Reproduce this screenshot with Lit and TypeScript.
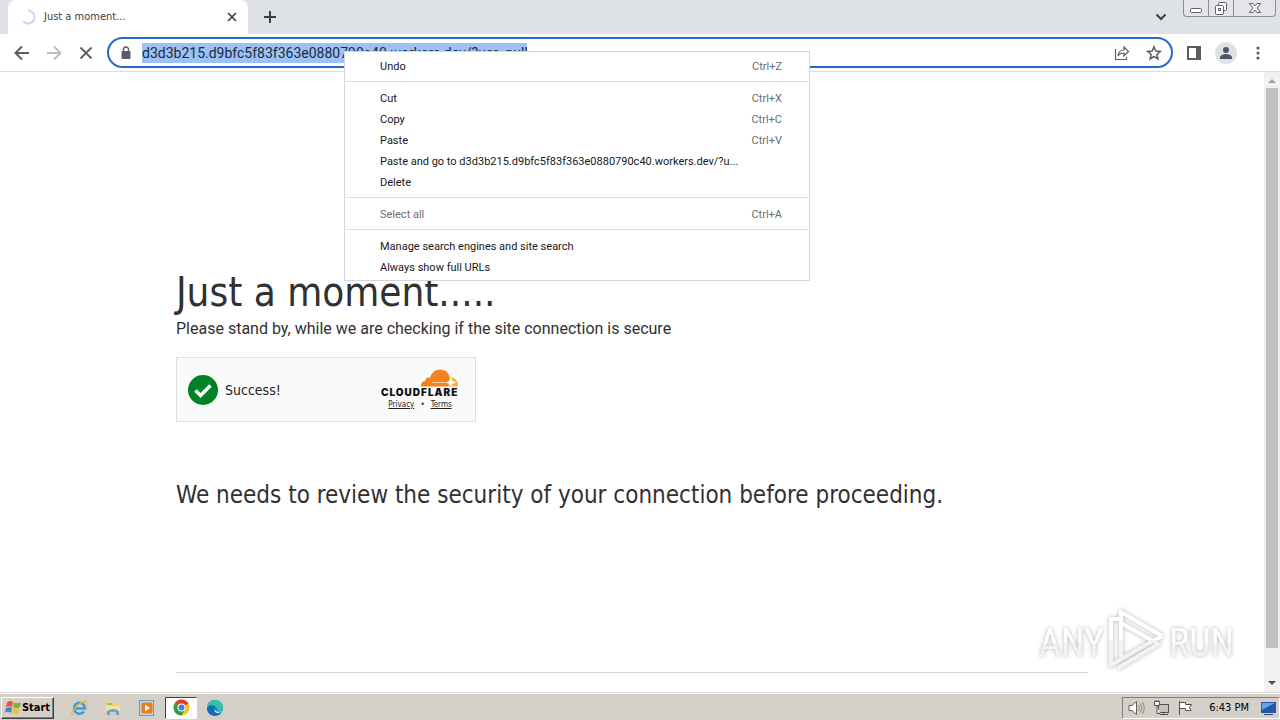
import { LitElement, html, css } from "lit";
import { customElement } from "lit/decorators.js";

const FONT = css`"DejaVu Sans Condensed", "Noto Sans", "Open Sans", sans-serif`;
const TEXT = css`Roboto, "Noto Sans", sans-serif`;

@customElement("browser-tabs")
class BrowserTabs extends LitElement {
  static styles = css`
    :host { display: flex; height: 34px; background: #dee1e6; font: 11px/16px ${FONT}; color: #3c4043; }
    button { border: 0; background: none; padding: 0; display: grid; place-items: center; }
    .tab { display: flex; align-items: center; gap: 8px; width: 220px; margin-left: 8px; padding: 0 8px 0 12px;
      background: #fff; border-radius: 8px 8px 0 0; box-sizing: content-box; }
    .title { flex: 1; }
    .new { width: 44px; }
    .spacer { flex: 1; }
    .list { width: 44px; }
    .window { display: flex; height: 17px; border: 1px solid #8a8e95; border-top: 0; border-radius: 0 0 4px 4px;
      box-sizing: border-box; margin-right: 4px; background: #e3e5e9; }
    .window button { width: 25px; border-right: 1px solid #8a8e95; }
    .window button:last-child { width: 41px; border-right: 0; }
  `;
  render() {
    return html`
      <div class="tab">
        <svg width="16" height="16" viewBox="0 0 16 16"><path d="M8 1.500a6.500 6.500 0 1 1-5 10.700" fill="none" stroke="#c9d7fb" stroke-width="2"/></svg>
        <span class="title">Just a moment...</span>
        <button aria-label="Close tab"><svg width="16" height="16"><path d="M4 4l8 8M12 4l-8 8" stroke="#3c4043" stroke-width="1.700"/></svg></button>
      </div>
      <button class="new" aria-label="New tab"><svg width="14" height="14"><path d="M7 1v12M1 7h12" stroke="#3c4043" stroke-width="2"/></svg></button>
      <span class="spacer"></span>
      <button class="list" aria-label="Search tabs"><svg width="12" height="8"><path d="M1.500 1.500l4.500 4.500 4.500-4.500" fill="none" stroke="#3c4043" stroke-width="2"/></svg></button>
      <div class="window">
        <button aria-label="Minimize"><svg width="14" height="16"><rect x="1.500" y="8.500" width="11" height="4" rx="1" fill="#fff" stroke="#5d6168"/></svg></button>
        <button aria-label="Restore"><svg width="14" height="16" fill="#fff" stroke="#5d6168"><rect x="4.500" y="2.500" width="8" height="8" rx="1"/><rect x="1.500" y="5.500" width="8" height="9" rx="1"/><rect x="4.500" y="8.500" width="2" height="2"/></svg></button>
        <button aria-label="Close"><svg width="14" height="16" fill="#fff" stroke="#5d6168"><path d="M1.500 3.500h3.500l2 2.500 2-2.500h3.500l-3.500 4.500 3.500 4.500h-3.500l-2-2.500-2 2.500h-3.500l3.500-4.500z"/></svg></button>
      </div>`;
  }
}

@customElement("browser-toolbar")
class BrowserToolbar extends LitElement {
  static styles = css`
    :host { display: flex; align-items: center; height: 37px; padding: 0 6px; background: #fff; border-bottom: 1px solid #dcdde0; }
    button { border: 0; background: none; padding: 0; width: 32px; height: 32px; display: grid; place-items: center; flex: none; }
    .box { flex: 1; display: flex; align-items: center; height: 31px; box-sizing: border-box; min-width: 0;
      border: 2px solid #1f6bd0; border-radius: 16px; margin: 0 5px; padding: 0 1px 0 9px; }
    input { border: 0; padding: 0; margin: 0 0 0 8px; outline: 0; width: 385px; height: 20px; background: #9cc1f5; color: #202a3c;
      font: 14px/20px ${TEXT}; }
    .gap { flex: 1; }
  `;
  render() {
    return html`
      <button aria-label="Back"><svg width="16" height="16" fill="none" stroke="#5a5d61" stroke-width="2"><path d="M15 8H2M8 1.500L1.500 8 8 14.500"/></svg></button>
      <button aria-label="Forward"><svg width="16" height="16" fill="none" stroke="#babcbe" stroke-width="2"><path d="M1 8h13M8 1.500L14.500 8 8 14.500"/></svg></button>
      <button aria-label="Stop"><svg width="14" height="14"><path d="M1.500 1.500l11 11M12.500 1.500l-11 11" stroke="#5a5d61" stroke-width="1.800"/></svg></button>
      <div class="box">
        <svg width="16" height="16" viewBox="0 0 16 16"><rect x="3.500" y="6" width="9" height="8" rx="1" fill="#5a5d61"/><path d="M5.500 6V4.500a2.500 2.500 0 0 1 5 0V6" fill="none" stroke="#5a5d61" stroke-width="1.400"/></svg>
        <input aria-label="Address" value="d3d3b215.d9bfc5f83f363e0880790c40.workers.dev/?usr=null">
        <span class="gap"></span>
        <button aria-label="Share"><svg width="16" height="16" fill="none" stroke="#5a5d61" stroke-width="1.200"><path d="M1.500 4v10.500h11v-2.500M4 11c.5-4 2.500-6 6-6V2l4.500 4.500-4.500 4.300V8c-3 0-4.600.8-6 3z"/></svg></button>
        <button aria-label="Bookmark"><svg width="16" height="16" fill="none" stroke="#5a5d61" stroke-width="1.500"><path d="M8 1.800l1.800 4.200 4.500.4-3.400 3 1 4.500L8 11.500l-3.900 2.400 1-4.500-3.400-3 4.500-.4z"/></svg></button>
      </div>
      <button aria-label="Side panel"><svg width="14" height="14"><path d="M1 1h12v12H1z" fill="none" stroke="#5a5d61" stroke-width="2"/><path d="M9 1h5v12H9z" fill="#5a5d61"/></svg></button>
      <button aria-label="Profile"><svg width="22" height="22"><circle cx="11" cy="11" r="11" fill="#dee1e6"/><circle cx="11" cy="8" r="3" fill="#4d566b"/><path d="M5 17v-1.500c0-2.500 4-3.500 6-3.500s6 1 6 3.500V17z" fill="#4d566b"/></svg></button>
      <button aria-label="Menu"><svg width="4" height="16" fill="#5a5d61"><circle cx="2" cy="3" r="1.600"/><circle cx="2" cy="8" r="1.600"/><circle cx="2" cy="13" r="1.600"/></svg></button>`;
  }
}

@customElement("edit-menu")
class EditMenu extends LitElement {
  static styles = css`
    :host { position: absolute; left: 344px; top: 51px; width: 466px; box-sizing: border-box; background: #fff;
      border: 1px solid #d4d5d7; padding: 4px 0 2px; font: 11px/21px ${TEXT}; z-index: 2; }
    button { display: flex; justify-content: space-between; width: 100%; height: 21px; border: 0; background: none;
      padding: 0 27px 0 35px; font: inherit; color: #16171a; text-align: left; white-space: nowrap; }
    button:disabled, .key { color: #6b6d70; }
    hr { border: 0; border-top: 1px solid #d9dadc; margin: 4px 1px 6px; }
  `;
  render() {
    const item = (label: string, key = "", off = false) =>
      html`<button ?disabled=${off}><span>${label}</span><span class="key">${key}</span></button>`;
    return html`
      ${item("Undo", "Ctrl+Z")}<hr>
      ${item("Cut", "Ctrl+X")}${item("Copy", "Ctrl+C")}${item("Paste", "Ctrl+V")}
      ${item("Paste and go to d3d3b215.d9bfc5f83f363e0880790c40.workers.dev/?u...")}${item("Delete")}<hr>
      ${item("Select all", "Ctrl+A", true)}<hr>
      ${item("Manage search engines and site search")}${item("Always show full URLs")}`;
  }
}

@customElement("check-page")
class CheckPage extends LitElement {
  static styles = css`
    :host { display: flex; flex: 1; min-height: 0; background: #fff; color: #313131; font-family: ${FONT}; }
    main { flex: 1; }
    .content { max-width: 912px; margin: 0 auto; padding: 195px 24px 0; }
    h1 { font-size: 40px; line-height: 50px; font-weight: 400; margin: 0; }
    p { font-family: ${TEXT}; font-size: 16px; line-height: 24px; margin: 0 0 16px; }
    h2 { font-size: 24px; line-height: 36px; font-weight: 400; margin: 55px 0 159px; }
    hr { border: 0; border-top: 1px solid #d5d5d5; margin: 0; }
    .widget { display: flex; align-items: center; width: 300px; height: 65px; box-sizing: border-box; background: #fafafa;
      border: 1px solid #e0e0e0; padding: 0 16px 0 11px; }
    .ok { flex: 1; margin-left: 7px; font-size: 14px; color: #232323; }
    .brand { display: flex; flex-direction: column; align-items: center; width: 78px; }
    .links { display: flex; gap: 6px; font-size: 8px; line-height: 14px; }
    a { color: #232323; }
    .name { font: 900 10px "Inter", sans-serif; letter-spacing: 1px; }
    .scroll { width: 16px; display: flex; flex-direction: column; align-items: center; background: #f1f1f1; padding: 6px 0; box-sizing: border-box; gap: 4px; }
    .thumb { width: 12px; flex: 1; background: #c1c1c1; margin-bottom: 28px; }
  `;
  render() {
    return html`
      <main><div class="content">
        <h1>Just a moment.....</h1>
        <p>Please stand by, while we are checking if the site connection is secure</p>
        <div class="widget">
          <svg width="30" height="30"><circle cx="15" cy="15" r="15" fill="#038127"/><path d="M7.500 15.500l5 5 10-10" fill="none" stroke="#fff" stroke-width="3.500"/></svg>
          <span class="ok">Success!</span>
          <div class="brand">
            <svg width="80" height="30" viewBox="0 -1 80 30">
              <path d="M41 17.500c-.3-3.500 1.500-5.500 4.500-5.800C45.500 9 48 7.800 50 9 51.500 3.500 55.500.5 60 .5c5 0 8.700 3 9.700 7.500L68.500 17.500z" fill="#f6821f"/>
              <path d="M69 17.500l1-9c4.500-.5 8.300 3 8 9z" fill="#fbad41"/>
              <path d="M52 13.500h16M71 9l1.200 3.300 3.300 1.200-3.300 1.200-1.200 3-1.200-3-3.300-1.200 3.300-1.200z" fill="#fff" stroke="#fff" stroke-width=".6"/>
              <text class="name" x="1" y="27" fill="#111">CLOUDFLARE</text>
            </svg>
            <div class="links"><a href="#">Privacy</a><span>•</span><a href="#">Terms</a></div>
          </div>
        </div>
        <h2>We needs to review the security of your connection before proceeding.</h2>
        <hr>
      </div></main>
      <div class="scroll">
        <svg width="8" height="6"><path d="M0 5l4-4 4 4z" fill="#a0a0a0"/></svg>
        <div class="thumb"></div>
        <svg width="8" height="6"><path d="M0 1l4 4 4-4z" fill="#505050"/></svg>
      </div>`;
  }
}

@customElement("task-bar")
class TaskBar extends LitElement {
  static styles = css`
    :host { display: flex; align-items: center; height: 28px; box-sizing: border-box; padding: 2px 0 0 1px; background: #d4d0c8;
      border-top: 1px solid #dedbd5; box-shadow: inset 0 1px #fff; font: 11px/20px ${FONT}; color: #000; }
    button { border: 0; background: none; padding: 0; display: flex; align-items: center; justify-content: center; }
    .start { height: 22px; width: 53px; box-sizing: border-box; font: bold 11px/20px ${FONT}; border: 1px solid;
      border-color: #fff #404040 #404040 #fff; box-shadow: inset -1px -1px #808080; }
    .apps { display: flex; flex: 1; margin-left: 9px; gap: 2px; }
    .apps button { width: 32px; height: 22px; box-sizing: border-box; }
    .apps .on { background: #fff; border: 1px solid; border-color: #404040 #fff #fff #404040; }
    .tray { display: flex; align-items: center; gap: 8px; height: 22px; box-sizing: border-box; padding: 0 2px 0 5px;
      border: 1px solid; border-color: #808080 #fff #fff #808080; }
    .clock { margin: 0 3px 0 8px; }
  `;
  render() {
    return html`
      <button class="start">
        <svg width="17" height="17"><path d="M2 3.500Q5 1 8 3L7 8Q4 6.500 1 8z" fill="#e8562a"/><path d="M9 3.500q3 1.500 7 0l-1.300 5Q11 10 8 8.300z" fill="#79b435"/><path d="M1 9q3-1.500 6 0l-1 5q-3-2-6-.5z" fill="#3a86d4"/><path d="M8 9.500q3 1.500 6.500 0l-1.200 5q-3.500 1.300-6.500-.5z" fill="#f7bf27"/></svg>Start</button>
      <div class="apps">
        <button aria-label="Internet Explorer"><svg width="18" height="18" fill="none"><path d="M14 12.500A5.500 5.500 0 1 1 15 9.500H5" stroke="#3a9de0" stroke-width="2.600"/><path d="M2.500 16C-1 14 10 2 15.500 2.500c1.500.3.800 2.500.3 3.500" stroke="#e8b93c" stroke-width="1.300"/></svg></button>
        <button aria-label="Explorer"><svg width="18" height="18"><path d="M2 3h5l1 2h8v7H2z" fill="#f1d477"/><path d="M3 4h5v2H3z" fill="#8fca66"/><path d="M2 7h14v5H2z" fill="#f7e39d"/><path d="M3 16v-4q6-4 12 0v4h-3v-3H6v3z" fill="#63a7d8"/></svg></button>
        <button aria-label="Media Player"><svg width="18" height="18"><rect x="1.500" y="1.500" width="14" height="15" fill="#b7d6ee" stroke="#6b99c4"/><rect x="3.500" y="3.500" width="11" height="11" rx="2" fill="#f07c12"/><path d="M7 5.500l5 3.500-5 3.500z" fill="#fff"/></svg></button>
        <button class="on" aria-label="Chrome"><svg width="17" height="17" viewBox="0 0 17 17"><circle cx="8.500" cy="8.500" r="8" fill="#f9c518"/><path d="M8.500 8.500L1.600 4.500A8 8 0 0 1 15.400 4.500z" fill="#e33b2e"/><path d="M8.500 8.500L1.600 4.500a8 8 0 0 0 6.900 12l3.500-6z" fill="#2c9f4b"/><circle cx="8.500" cy="8.500" r="4" fill="#fff"/><circle cx="8.500" cy="8.500" r="3" fill="#3f7fe8"/></svg></button>
        <button aria-label="Edge"><svg width="18" height="18"><circle cx="9" cy="9" r="8" fill="#1682cf"/><path d="M1 9a8 8 0 0 1 16 0c0 3-4 4-6 2 1-4-6-6-10-2z" fill="#34c1a8"/><path d="M1 9c3-4 8-3 8 0-2 1-1.500 6 5 5-5 5-13 2-13-5z" fill="#1768b5"/><path d="M9 9c-1 3 3 5 7 3-2 2-6 3-7.500 0z" fill="#e6f5fb"/></svg></button>
      </div>
      <div class="tray">
        <svg width="17" height="16" fill="#fff" stroke="#62605c"><path d="M1 5.500h3L8.500 1.500v13L4 10.500H1z"/><path d="M10.500 5q2 3 0 6M12.500 3.500q3 4.500 0 9M14.500 2q3.500 6 0 12" fill="none" stroke="#8d8a84"/></svg>
        <svg width="16" height="16" fill="#f4f4f4" stroke="#55534f"><rect x="5.500" y="4.500" width="10" height="8" fill="#c4c2bd"/><path d="M7 14.500h8M10.500 12.500v2"/><path d="M1.500 1.500h5v4h-5zM4 5.500v8h3"/><path d="M3 0v2M5.500 0v2"/></svg>
        <svg width="16" height="16" fill="#fff" stroke="#55534f"><path d="M2.500 1v14M2.500 2.500h6v2h6l-2 3 1.500 3h-5.500v-2h-6z"/></svg>
        <span class="clock">6:43 PM</span>
        <svg width="17" height="16"><rect x="1" y="2" width="15" height="11" fill="#2257ad"/><path d="M2 3h13L2 10z" fill="#66a1e4"/><path d="M4 14h9v1H4z" fill="#3a4654"/></svg>
      </div>`;
  }
}

@customElement("app-root")
class AppRoot extends LitElement {
  static styles = css`
    :host { display: flex; flex-direction: column; height: 100vh; position: relative; overflow: hidden; }
    .mark { position: absolute; right: 44px; bottom: 46px; filter: drop-shadow(0 0 2px #b4b4b4); }
    .word { font: 400 38px "Liberation Sans Narrow", "Roboto Condensed", sans-serif; }
  `;
  render() {
    return html`
      <browser-tabs></browser-tabs>
      <browser-toolbar></browser-toolbar>
      <check-page></check-page>
      <task-bar></task-bar>
      <edit-menu></edit-menu>
      <svg class="mark" width="200" height="66" viewBox="0 0 200 66">
        <defs><linearGradient id="tint" x1="0" y1="0" x2="0" y2="1"><stop offset=".5" stop-color="#fff"/><stop offset=".5" stop-color="#f3f3f3"/></linearGradient></defs>
        <text class="word" x="3" y="48" fill="url(#tint)">ANY</text><text class="word" x="133" y="48" fill="url(#tint)">RUN</text>
        <g fill="none" stroke="url(#tint)" stroke-width="4"><path d="M85 43V4L126 28M84 11H75V57l9-5M85 15L122 36 82 60M126 28L85 51V43"/></g>
      </svg>`;
  }
}
